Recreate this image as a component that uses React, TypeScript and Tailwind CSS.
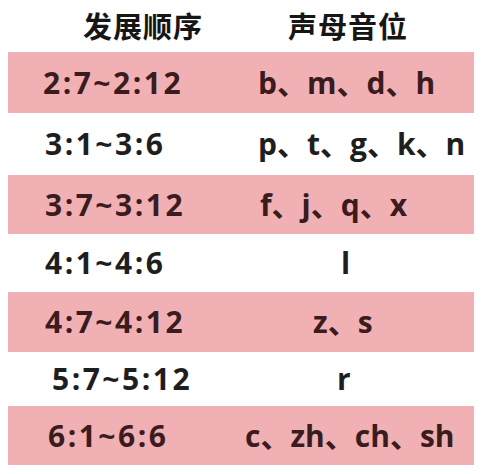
const rows = [
  { age: "2:7~2:12", sounds: "b、m、d、h", pink: true, ageX: "pl-[35px]", soundX: "pl-[50px]", h: "h-[61px]" },
  { age: "3:1~3:6", sounds: "p、t、g、k、n", pink: false, ageX: "pl-[37px]", soundX: "pl-[50px]", h: "h-[62px]" },
  { age: "3:7~3:12", sounds: "f、j、q、x", pink: true, ageX: "pl-[37px]", soundX: "pl-[52px]", h: "h-[59px]" },
  { age: "4:1~4:6", sounds: "l", pink: false, ageX: "pl-[37px]", soundX: "pl-[133px]", h: "h-[58px]" },
  { age: "4:7~4:12", sounds: "z、s", pink: true, ageX: "pl-[37px]", soundX: "pl-[105px]", h: "h-[60px]" },
  { age: "5:7~5:12", sounds: "r", pink: false, ageX: "pl-[44px]", soundX: "pl-[129px]", h: "h-[54px]" },
  { age: "6:1~6:6", sounds: "c、zh、ch、sh", pink: true, ageX: "pl-[40px]", soundX: "pl-[37px]", h: "h-[59px]" },
];

export default function App() {
  return (
    <div className="w-[484px] h-[474px] overflow-hidden bg-white pl-[8px] pr-[10px] font-['Open_Sans','Noto_Sans_CJK_SC',sans-serif]">
      <div className="flex h-[52px] items-center text-[29px] font-bold tracking-[1px] text-[#161616] font-['Noto_Sans_CJK_SC',sans-serif]">
        <div className="w-[280px] shrink-0 pl-[75px]">发展顺序</div>
        <div>声母音位</div>
      </div>
      {rows.map((row) => (
        <div
          key={row.age}
          className={`flex items-center ${row.h} text-[30px] font-bold leading-none ${
            row.pink ? "bg-[#f1b0b4] text-[#3a1c1e]" : "bg-white text-[#1e1e1e]"
          }`}
        >
          <div className={`w-[200px] shrink-0 tracking-[2.5px] ${row.ageX}`}>{row.age}</div>
          <div className={`whitespace-nowrap ${row.soundX}`}>{row.sounds}</div>
        </div>
      ))}
    </div>
  );
}
